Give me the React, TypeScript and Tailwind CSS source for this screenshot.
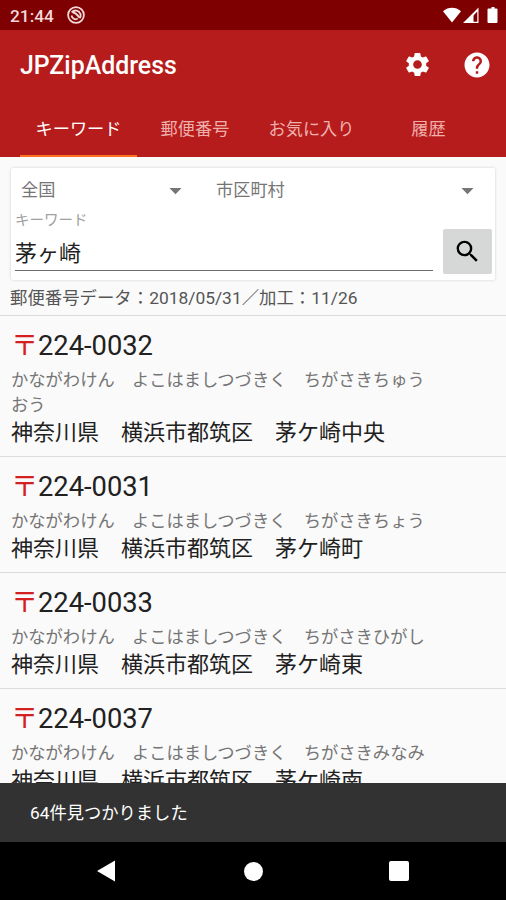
import { MdArrowDropDown, MdHelp, MdSearch, MdSettings } from "react-icons/md";
import { clsx } from "clsx";

interface Address {
  zip: string;
  kana: string;
  name: string;
}

const addresses: Address[] = [
  { zip: "224-0032", kana: "かながわけん　よこはましつづきく　ちがさきちゅうおう", name: "神奈川県　横浜市都筑区　茅ケ崎中央" },
  { zip: "224-0031", kana: "かながわけん　よこはましつづきく　ちがさきちょう", name: "神奈川県　横浜市都筑区　茅ケ崎町" },
  { zip: "224-0033", kana: "かながわけん　よこはましつづきく　ちがさきひがし", name: "神奈川県　横浜市都筑区　茅ケ崎東" },
  { zip: "224-0037", kana: "かながわけん　よこはましつづきく　ちがさきみなみ", name: "神奈川県　横浜市都筑区　茅ケ崎南" },
];

const tabs = [
  { label: "キーワード", width: "w-[117px]" },
  { label: "郵便番号", width: "w-[116px]" },
  { label: "お気に入り", width: "w-[117px]" },
  { label: "履歴", width: "w-[117px]" },
];

function StatusBar() {
  return (
    <div className="flex h-[30px] shrink-0 items-center bg-[#7f0000] pl-2.5 pr-[7px] text-white">
      <span className="pt-0.5 text-[17.3px] font-medium leading-[28px] text-[#f3d9d9]">21:44</span>
      <svg className="ml-[13px] size-[18px]" viewBox="0 0 18 18" fill="none" stroke="#f3d9d9">
        <circle cx="9" cy="9" r="7.9" strokeWidth="1.8" />
        <path d="M4.600 6.300C7.500 3.300 12 4.200 13.500 8C13.900 9.800 13.500 11 13 12" strokeWidth="1.900" />
        <path d="M5.500 6.300C8.500 6.500 10.800 9.500 12.800 12" strokeWidth="1.900" />
        <path d="M4.500 9.500C5 12.500 8 14.300 10.800 12.600" strokeWidth="1.700" />
      </svg>
      <svg className="ml-auto h-[18px] w-[57px]" viewBox="0 0 57 18" fill="#fff">
        <path d="M1 5.200C6.300.6 13.700.6 19 5.200L10 16.500Z" />
        <path fillRule="evenodd" d="M36.500 1.500V17H21ZM35.300 5.500 30 11V15.700H35.300Z" />
        <path d="M30 9.500 31.500 8V16H30Z" />
        <path d="M47.500 2.500H49.500V1H52.500V2.500H54.500Q55.500 2.500 55.500 3.500V16Q55.500 17 54.500 17H46.500Q45.500 17 45.500 16V3.500Q45.500 2.500 46.500 2.500Z" />
      </svg>
    </div>
  );
}

function Header() {
  return (
    <header className="flex h-[127px] shrink-0 flex-col bg-[#b71c1c] text-white">
      <div className="flex h-[69px] items-center pl-5 pr-3.5">
        <h1 className="pt-[3px] text-[24.9px] font-medium leading-8">JPZipAddress</h1>
        <MdSettings className="ml-auto size-[29px]" />
        <MdHelp className="ml-[30px] size-[30px]" />
      </div>
      <nav className="flex flex-1 pl-5">
        {tabs.map((tab, i) => (
          <button
            key={tab.label}
            className={clsx(
              "flex items-center justify-center border-b-2 pt-1.5 text-[17.2px]",
              tab.width,
              i === 0 ? "border-[#ff6f20]" : "border-transparent text-[#eeb0ad]",
            )}
          >
            {tab.label}
          </button>
        ))}
      </nav>
    </header>
  );
}

function SearchCard() {
  return (
    <section className="mx-[11px] mt-[11px] h-[112px] shrink-0 rounded-[2px] bg-white shadow-[0_0_3px_rgba(0,0,0,0.18)]">
      <div className="flex h-11 items-center text-[17.2px] text-[#757575]">
        <div className="flex w-[195px] items-center justify-between pl-2.5 pr-4">
          <span className="pt-0.5">全国</span>
          <MdArrowDropDown className="size-[29px]" />
        </div>
        <div className="flex flex-1 items-center justify-between pl-2.5 pr-[13px]">
          <span className="pt-0.5">市区町村</span>
          <MdArrowDropDown className="size-[29px]" />
        </div>
      </div>
      <div className="flex">
        <div className="ml-1 w-[418px]">
          <div className="h-4 text-[14.500px] leading-[18px] text-[#a0a0a0]">キーワード</div>
          <div className="h-[43px] border-b border-[#6c6c6c] pt-2 text-[22px] leading-[35px] text-[#212121]">茅ヶ崎</div>
        </div>
        <button className="ml-2.5 mt-[17px] flex h-[45px] w-[49px] items-center justify-center rounded-[2px] bg-[#d6d8d7] text-black">
          <MdSearch className="size-[29px]" />
        </button>
      </div>
    </section>
  );
}

function AddressRow({ address }: { address: Address }) {
  return (
    <li className="border-b border-[#dcdcdc] pb-2 pl-[11px] pt-3.5">
      <div className="flex h-8 items-center text-[27.3px] leading-8 text-[#212121]">
        <span className="w-[27px] text-[#d32020]">〒</span>
        {address.zip}
      </div>
      <p className="mt-1.5 w-[425px] text-[17.3px] leading-[25px] text-[#757575]">{address.kana}</p>
      <p className="h-[30px] text-[22px] leading-[30px] text-[#212121]">{address.name}</p>
    </li>
  );
}

function NavigationBar() {
  return (
    <div className="flex h-[58px] shrink-0 items-center bg-black pl-[97px] pr-[97px]">
      <svg className="h-[22px] w-[18px]" viewBox="0 0 18 22" fill="#fff">
        <path d="M18 .5V21.500L0 11Z" />
      </svg>
      <div className="ml-[129px] size-[19px] rounded-full bg-white" />
      <div className="ml-auto size-5 rounded-[2px] bg-white" />
    </div>
  );
}

export default function App() {
  return (
    <div className="flex h-[900px] w-[506px] flex-col overflow-hidden bg-[#fafafa] font-['Roboto','Noto_Sans_CJK_JP',sans-serif]">
      <StatusBar />
      <Header />
      <SearchCard />
      <div className="h-9 shrink-0 border-b border-[#dcdcdc] pl-[10px] pt-[5px] text-[17.4px] leading-[27px] text-[#555] [font-kerning:none]">
        郵便番号データ：2018/05/31／加工：11/26
      </div>
      <ul className="min-h-0 flex-1 overflow-hidden">
        {addresses.map((address) => (
          <AddressRow key={address.zip} address={address} />
        ))}
      </ul>
      <div className="flex h-[59px] shrink-0 items-center bg-[#323232] pl-[30px] pt-0.5 text-[17.3px] text-white">
        64件見つかりました
      </div>
      <NavigationBar />
    </div>
  );
}
